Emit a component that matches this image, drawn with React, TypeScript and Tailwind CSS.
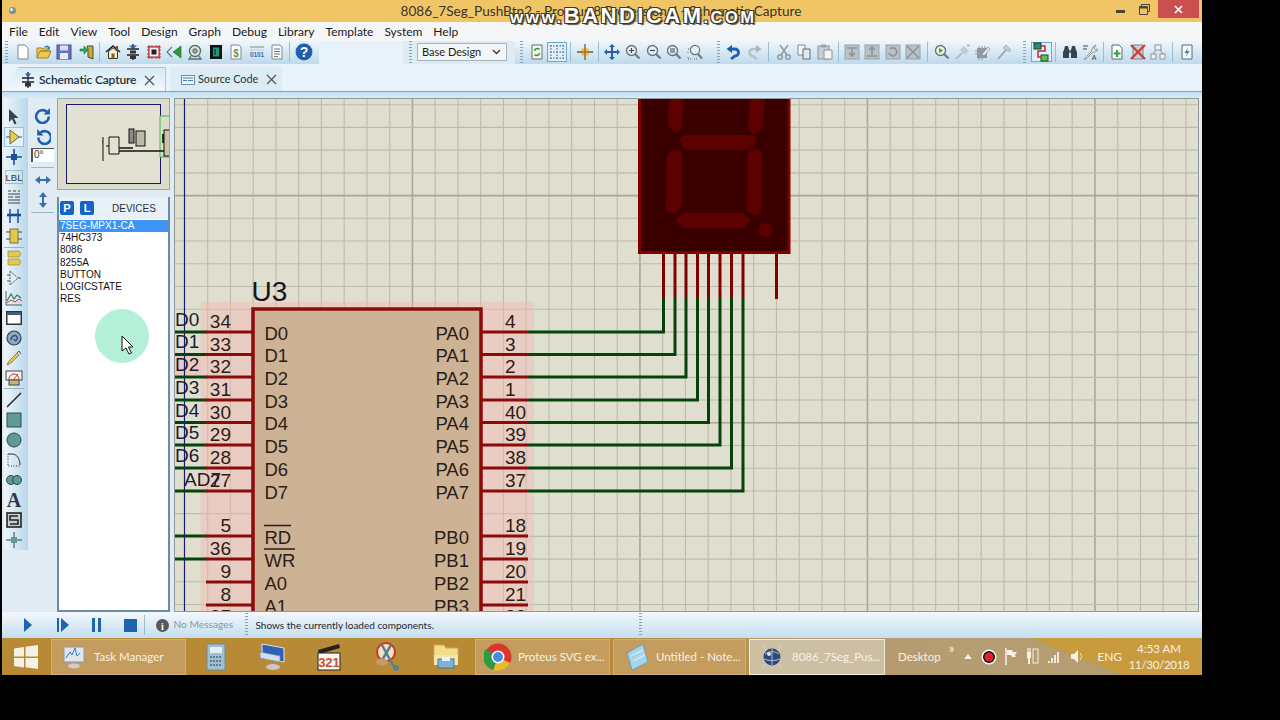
import { FC, ReactNode } from "react";

const menus = ["File", "Edit", "View", "Tool", "Design", "Graph", "Debug", "Library", "Template", "System", "Help"];
const devices = ["7SEG-MPX1-CA", "74HC373", "8086", "8255A", "BUTTON", "LOGICSTATE", "RES"];

const S: FC<{ children: ReactNode; size?: number }> = ({ children, size = 16 }) => (
  <svg width={size} height={size} viewBox="0 0 16 16" fill="none">
    {children}
  </svg>
);

const Lens = ({ inner, fill = "#e8eef2" }: { inner?: ReactNode; fill?: string }) => (
  <S>
    <path d="M10 10l4.5 4.5" stroke="#6b7f8c" strokeWidth="2.4" />
    <circle cx="6.5" cy="6.5" r="5" fill={fill} stroke="#64727c" strokeWidth="1.3" />
    {inner}
  </S>
);

const GrayBlock = ({ d }: { d: string }) => (
  <S>
    <rect x="1" y="1" width="14" height="14" fill="#b9c2c6" stroke="#98a3a8" />
    <path d={d} stroke="#8a9499" strokeWidth="1.6" />
  </S>
);

const icons: Record<string, ReactNode> = {
  new: <S><path d="M3 1h7l3 3v11H3z" fill="#fff" stroke="#7c8a94" /></S>,
  open: <S><path d="M1 14V4h5l1 1h6v2H4l-3 7zm0 0h11l3-7H4" fill="#f2c94f" stroke="#a3812b" /><path d="M8 3c2-2 4-2 5 0l1-1v3h-3l1-1c-1-1-2-1-3 0" fill="#3f7fc0" /></S>,
  save: <S><rect x="1" y="1" width="14" height="14" fill="#6b73c0" stroke="#4a5198" /><rect x="4" y="1.5" width="8" height="5" fill="#d9def0" /><rect x="4" y="9" width="8" height="6" fill="#e9ebf5" /></S>,
  imp: <S><path d="M8 2h6v13l-5-2V5z" fill="#c7a93f" stroke="#4d4d2c" /><path d="M1 5h4V2l4 4-4 4V7H1z" fill="#33a852" stroke="#1d6b33" strokeWidth=".6" /></S>,
  home: <S><path d="M1 8l7-6 7 6" stroke="#222" strokeWidth="1.6" /><path d="M3.5 7.5v7h9v-7L8 3.8z" fill="#f5efd0" stroke="#333" /><rect x="6.5" y="9.5" width="3" height="5" fill="#8b5d24" /><rect x="11" y="2" width="2" height="4" fill="#a33" /></S>,
  comp: <S><path d="M8 0v5M8 11v5M2 5h12M2 11h12" stroke="#222" strokeWidth="1.4" /><path d="M4 1.5h8L8 5z" fill="#2a5da8" /><rect x="5" y="6.5" width="6" height="3" fill="#333" /><rect x="5" y="12" width="6" height="3" fill="#333" /></S>,
  chip: <S><path d="M3 1v14M6 1v14M10 1v14M13 1v14M1 3h14M1 6h14M1 10h14M1 13h14" stroke="#c6363c" /><rect x="3" y="3" width="10" height="10" fill="#fbeeee" stroke="#a02028" /><rect x="5.5" y="5.5" width="5" height="5" fill="#222" /></S>,
  back: <S><path d="M15 2v12L7 8z" fill="#2c9a3c" stroke="#2b5a32" strokeWidth=".6" /><path d="M6 3L1 8l5 5" stroke="#6a7a80" strokeWidth="1.2" /></S>,
  gear: <S><circle cx="8" cy="7" r="5.5" fill="#dfe7e6" stroke="#5c6b6a" strokeWidth="1.4" /><circle cx="8" cy="7" r="2.2" fill="#9bb0a4" stroke="#4d5b55" /><path d="M4 12l-2 3h12l-2-3" stroke="#5c6b6a" strokeWidth="1.3" /></S>,
  pcb: <S><rect x="2" y="1" width="12" height="14" fill="#111" /><rect x="5" y="3.5" width="6" height="9" fill="#1a9c84" /><path d="M7 5v6" stroke="#111" /></S>,
  bill: <S><path d="M3 1h8l2 2v12H3z" fill="#fcfcf4" stroke="#7e8c92" /><text x="8" y="12.5" fontSize="10" fontWeight="700" textAnchor="middle" fill="#7d8f3c" fontFamily="Liberation Sans">$</text></S>,
  code: <S><path d="M1 3h14" stroke="#99a7ae" strokeWidth="1.4" /><path d="M1 6h14" stroke="#c4ced3" /><text x="8" y="13" fontSize="6.4" fontWeight="700" textAnchor="middle" fill="#3b6fb0" fontFamily="Liberation Sans">0101</text></S>,
  doc: <S><path d="M3 1h8l2 2v12H3z" fill="#f6f7f8" stroke="#7e8c92" /><path d="M5 5h6M5 7.5h6M5 10h6M5 12.5h4" stroke="#6e7a80" /></S>,
  help: <svg width="20" height="20" viewBox="0 0 20 20"><circle cx="10" cy="10" r="9" fill="#1f5fae" stroke="#cfe0ef" strokeWidth="1.2" /><text x="10" y="15" fontSize="14" fontWeight="700" textAnchor="middle" fill="#fff" fontFamily="Liberation Sans">?</text></svg>,
  refresh: <S><path d="M3 1h10v14H3z" fill="#f7f8f3" stroke="#61706f" /><path d="M5.5 7c0-2 3-3.500 5-1.500M10.500 9c0 2-3 3.500-5 1.500" stroke="#2d9a38" strokeWidth="1.5" /></S>,
  grid: <S><path d="M1 2h14M1 8h14M1 14h14M2 1v14M8 1v14M14 1v14" stroke="#3a5464" strokeDasharray="1.400 1.800" /></S>,
  origin: <S><path d="M8 0v16M0 8h16" stroke="#6a6238" strokeWidth="1.3" /><rect x="4.500" y="4.500" width="7" height="7" fill="#e4bc3e" /><path d="M8 4v8M4 8h8" stroke="#a8492e" /></S>,
  pan: <S><path d="M8 0l3 3H9v4h4V5l3 3-3 3V9H9v4h2l-3 3-3-3h2V9H3v2L0 8l3-3v2h4V3H5z" fill="#1e5fae" /></S>,
  zin: <Lens inner={<path d="M4 6.500h5M6.500 4v5" stroke="#3d4a52" strokeWidth="1.2" />} />,
  zout: <Lens inner={<path d="M4 6.500h5" stroke="#3d4a52" strokeWidth="1.2" />} />,
  zall: <Lens inner={<rect x="4" y="4" width="5" height="5" fill="#8e9ca4" />} />,
  zarea: <S><path d="M1 5h2M1 8v2M1 13v2h3M7 15h3" stroke="#54626b" strokeDasharray="1 1" /><path d="M11 10l4 4.500" stroke="#6b7f8c" strokeWidth="2.200" /><circle cx="8" cy="6" r="4.600" fill="#e8eef2" stroke="#64727c" strokeWidth="1.200" /></S>,
  undo: <S><path d="M4 5h5a3.500 3.500 0 0 1 0 7l-4 3" stroke="#1c5fae" strokeWidth="2.800" /><path d="M0.500 5L6 1v8z" fill="#1c5fae" /></S>,
  redo: <S><path d="M12 5H7a3.500 3.500 0 0 0 0 7l4 3" stroke="#b9c1c6" strokeWidth="2.600" /><path d="M15.500 5L10 1v8z" fill="#aab3b8" /></S>,
  cut: <S><path d="M4 1l7 10M12 1L5 11" stroke="#8f9aa0" strokeWidth="1.500" /><circle cx="4" cy="13" r="2.300" stroke="#8f9aa0" strokeWidth="1.500" /><circle cx="12" cy="13" r="2.300" stroke="#8f9aa0" strokeWidth="1.500" /></S>,
  copy: <S><path d="M2 1h7v10H2z" fill="#f4f6f7" stroke="#7e8c92" /><path d="M7 5h7v10H7z" fill="#e4e9ec" stroke="#5c6a72" /></S>,
  paste: <S><rect x="1" y="2" width="11" height="13" fill="#c8cfd2" stroke="#8a959b" /><rect x="4" y="0.500" width="5" height="3" fill="#9aa5ab" /><path d="M7 6h8v9H7z" fill="#f3f5f6" stroke="#8a959b" /></S>,
  blk1: <GrayBlock d="M3 4h10M8 4v8M5 9l3 3 3-3" />,
  blk2: <GrayBlock d="M3 12h10M8 3v8M5 6l3-3 3 3" />,
  blk3: <GrayBlock d="M5 5a4 4 0 1 1-1 4" />,
  blk4: <GrayBlock d="M2 2l12 12M14 2L2 14" />,
  zgo: <Lens fill="#f3f0d0" inner={<path d="M5 4l4 2.500L5 9z" fill="#3aa24a" />} />,
  auto: <S><path d="M1 15l6-6M6 5l5 5" stroke="#aab4b9" strokeWidth="1.500" /><path d="M5 6l4-4 5 5-4 4z" fill="#c3cbcf" /><path d="M13 0v3M12 1.500h3" stroke="#aab4b9" /></S>,
  chipw: <S><rect x="2" y="4" width="10" height="10" fill="#8f999e" /><path d="M4 2v2M7 2v2M10 2v2M0 7h2M0 10h2M4 14v2M7 14v2" stroke="#8f999e" /><path d="M7 10l6-7 2 2-6 7z" fill="#e4e8ea" stroke="#6f7a80" strokeWidth=".6" /></S>,
  hammer: <S><path d="M2 15l8-9" stroke="#9aa4a9" strokeWidth="1.800" /><path d="M7 4l3-3 5 5-2 2z" fill="#c5ccd0" stroke="#8f999e" strokeWidth=".6" /></S>,
  net: <svg width="18" height="20" viewBox="0 0 18 20"><rect x="2" y="1" width="7" height="6" fill="#2f8f6a" stroke="#16402e" /><rect x="9" y="13" width="7" height="6" fill="#5bbf55" stroke="#17521f" /><path d="M9 4h4v5H6v6h3" stroke="#c22b2b" strokeWidth="1.500" fill="none" /></svg>,
  bino: <S><path d="M2 6l1-4h3l1 4v8H1V8zM14 6l-1-4h-3L9 6v8h6V8z" fill="#39424a" /><rect x="7" y="6" width="2" height="3" fill="#6a747b" /></S>,
  wrencha: <S><path d="M1 2h5M1 5h4" stroke="#444" /><path d="M2 15l7-7 2-5 3-2-2 3 2 2 3-2-2 3-5 2-7 7z" fill="#dfe4e6" stroke="#59656b" strokeWidth=".6" /><text x="12" y="15.500" fontSize="7" textAnchor="middle" fill="#333" fontFamily="Liberation Sans">A</text></S>,
  adds: <S><path d="M3 1h7l3 3v11H3z" fill="#fff" stroke="#5c6a72" /><path d="M8 6v7M4.500 9.500h7" stroke="#2fa53c" strokeWidth="2.200" /></S>,
  dels: <S><path d="M3 1h10v14H3z" fill="#c8d0d4" stroke="#77858c" /><path d="M1 1l14 14M15 1L1 15" stroke="#d03a30" strokeWidth="2.200" /></S>,
  tree: <S><rect x="5" y="1" width="6" height="5" fill="#eef2f4" stroke="#8a959b" /><rect x="1" y="10" width="5" height="5" fill="#eef2f4" stroke="#8a959b" /><rect x="10" y="10" width="5" height="5" fill="#eef2f4" stroke="#8a959b" /><path d="M6 6l-3 4M10 6l3 4" stroke="#8a959b" /></S>,
  bolt: <S><path d="M3 1h10v14H3z" fill="#f6f8f9" stroke="#5c6a72" /><path d="M9.500 3L5.500 9H8l-1.500 4 4-6H8z" fill="#2f7fc0" /></S>,
};

const Btn = ({ name, active }: { name: string; active?: boolean }) => (
  <div className={`w-[20.6px] h-[20px] flex items-center justify-center shrink-0 ${active ? "border border-[#6fa8c8] bg-[#dff0fa]" : ""}`}>
    {icons[name]}
  </div>
);

const Sep = ({ w = 8 }: { w?: number }) => (
  <div className="h-[20px] flex justify-center shrink-0" style={{ width: w }}>
    <div className="w-px h-full bg-[#9fbccd]" />
  </div>
);

const Grip = () => (
  <div className="w-[3px] h-[22px] shrink-0 [background:repeating-linear-gradient(to_bottom,#8ba3b3_0_1px,transparent_1px_3px)]" />
);

const Group: FC<{ children: ReactNode; className?: string }> = ({ children, className }) => (
  <div className={`h-[23px] pb-[1px] flex items-center bg-gradient-to-b from-[#eef6fb] to-[#bedaec] ${className}`}>{children}</div>
);

const ToolBar = () => (
  <div className="h-[24px] flex bg-[#e8f2f8]">
    <Group className="w-[317px] pl-[3px]">
      <Grip />
      <div className="w-[5px]" />
      <Btn name="new" /><Btn name="open" /><Btn name="save" /><div className="w-[2px]" /><Btn name="imp" />
      <Sep w={5} />
      <Btn name="home" /><Btn name="comp" /><Btn name="chip" /><Btn name="back" /><Btn name="gear" /><Btn name="pcb" /><Btn name="bill" /><Btn name="code" /><Btn name="doc" />
      <Sep w={4} />
      <div className="w-[24px] flex justify-center">{icons.help}</div>
    </Group>
    <Group className="ml-[84px] w-[112px] pl-[6px] bg-none bg-[#dcebf4]">
      <Grip />
      <div className="ml-[5px] w-[90px] h-[18px] border border-[#a8b4bc] bg-[#f4f5f6] flex items-center justify-between pl-[4px] pr-[5px] text-[11px] text-[#1a1a1a]">
        Base Design
        <svg width="9" height="6" viewBox="0 0 9 6"><path d="M1 1l3.500 3.500L8 1" stroke="#333" strokeWidth="1.300" fill="none" /></svg>
      </div>
    </Group>
    <Group className="w-[190px] pl-[5px]">
      <Grip />
      <div className="w-[4px]" />
      <Btn name="refresh" /><Btn name="grid" active />
      <Sep w={7} />
      <Btn name="origin" />
      <Sep w={7} />
      <Btn name="pan" /><Btn name="zin" /><Btn name="zout" /><Btn name="zall" /><Btn name="zarea" />
    </Group>
    <Group className="w-[309px] pl-[12px]">
      <Grip />
      <div className="w-[4px]" />
      <Btn name="undo" /><Btn name="redo" />
      <Sep w={9} />
      <Btn name="cut" /><Btn name="copy" /><Btn name="paste" />
      <Sep w={6} />
      <Btn name="blk1" /><Btn name="blk2" /><Btn name="blk3" /><Btn name="blk4" />
      <Sep w={8} />
      <Btn name="zgo" /><Btn name="auto" /><Btn name="chipw" /><Btn name="hammer" />
    </Group>
    <Group className="flex-1 pl-[9px]">
      <Grip />
      <div className="w-[5px]" />
      <Btn name="net" active />
      <Sep w={8} />
      <Btn name="bino" /><Btn name="wrencha" />
      <Sep w={6} />
      <Btn name="adds" /><Btn name="dels" /><Btn name="tree" />
      <Sep w={8} />
      <Btn name="bolt" />
    </Group>
  </div>
);

const X = ({ size = 11 }: { size?: number }) => (
  <svg width={size} height={size} viewBox="0 0 11 11"><path d="M1 1l9 9M10 1l-9 9" stroke="#555" strokeWidth="1.300" /></svg>
);

const Tabs = () => (
  <div className="h-[27px] flex items-end bg-[#e8f2f8] border-b border-[#7ea6bc] relative">
    <div className="w-[164px] h-[24px] pt-[1px] flex items-center border-t border-r border-[#a9c8da] [clip-path:polygon(10%_0,100%_0,100%_100%,0_100%)] bg-gradient-to-b from-[#d8ebf6] to-[#f0f7fb] pl-[18px]">
      <S><path d="M8 0v16M2 6h12M2 10h12" stroke="#222" strokeWidth="1.300" /><path d="M5 1.500h6L8 5.500z" fill="#2a5da8" /><rect x="5" y="11" width="6" height="3.500" fill="#333" /></S>
      <span className="ml-[3px] text-[12px] font-semibold text-[#24303a] tracking-[-0.15px] whitespace-nowrap">Schematic Capture</span>
      <span className="ml-[8px]"><X /></span>
    </div>
    <div className="w-[112px] ml-[4px] h-[24px] pt-[1px] flex items-center bg-[#dcecf5] pl-[11px]">
      <svg width="14" height="10" viewBox="0 0 14 10"><rect x=".5" y=".5" width="13" height="9" fill="#eef6fb" stroke="#6f8ea3" /><path d="M2 3h10" stroke="#3f7fc0" /><path d="M2 5.500h4M7 5.500h5" stroke="#3f7fc0" /></svg>
      <span className="ml-[3px] text-[10.800px] text-[#24303a] whitespace-nowrap">Source Code</span>
      <span className="ml-[8px]"><X /></span>
    </div>
  </div>
);

const ToolIcon: Record<string, ReactNode> = {
  arrow: <S><path d="M3 0v13l3-3 2.500 5.500 2-1L8 9h4.500z" fill="#39414a" /></S>,
  comp: <S><path d="M0 8h4M12 8h4" stroke="#555" /><path d="M4 1l9 7-9 7z" fill="#e8cc4c" stroke="#6b6a3a" /></S>,
  junc: <S><path d="M8 0v16M0 8h16" stroke="#1e4e96" strokeWidth="1.600" /><rect x="5" y="5" width="6" height="6" fill="#1e4e96" /></S>,
  lbl: <svg width="18" height="14" viewBox="0 0 18 14"><rect x=".5" y=".5" width="17" height="13" fill="none" stroke="#7c8a94" strokeDasharray="1 1" /><text x="9" y="11" fontSize="9.500" textAnchor="middle" fill="#333" fontFamily="Liberation Sans">LBL</text></svg>,
  script: <S><path d="M2 2h3M7 2h3M12 2h2M2 5h12M2 8h5M9 8h5M2 11h12M2 14h12" stroke="#444" /></S>,
  bus: <S><path d="M1 7h14" stroke="#1e4e96" strokeWidth="2.600" /><path d="M4 1v14M12 1v14" stroke="#1e4e96" strokeWidth="1.500" /></S>,
  sub: <S><rect x="4" y="1" width="8" height="14" fill="#e4c84a" stroke="#7c7238" /><path d="M0 4h4M0 11h4M12 4h4M12 11h4" stroke="#444" /></S>,
  term: <S><path d="M2 1h11l2 3-2 3H2z" fill="#e4c84a" stroke="#8c8038" strokeWidth=".6" /><path d="M2 9h11l2 3-2 3H2z" fill="#e4c84a" stroke="#8c8038" strokeWidth=".6" /></S>,
  pin: <S><path d="M1 5h3M1 11h3M12 8h3" stroke="#555" /><path d="M4 1l8 7-8 7z" fill="#e4edf3" stroke="#4f5b63" strokeDasharray="2 1" /></S>,
  graph: <svg width="18" height="16" viewBox="0 0 18 16"><path d="M1 1v14h16" stroke="#3f6070" fill="none" /><path d="M2 11l4-7 3 5 3-4 4 3" stroke="#2f7a50" strokeWidth="1.200" fill="none" /><path d="M2 13l4-3 4 2 4-3 3 2" stroke="#c23b30" fill="none" /></svg>,
  win: <svg width="16" height="14" viewBox="0 0 16 14"><rect x=".75" y=".75" width="14.500" height="12.500" fill="#fff" stroke="#333" strokeWidth="1.500" /><rect x="1" y="1" width="14" height="3" fill="#3f5f78" /></svg>,
  tape: <S><circle cx="8" cy="8" r="7" fill="#8fa8b8" stroke="#33434f" strokeWidth="1.200" /><path d="M5 10c0-4 5-6 6-3s-2 5-3 2" stroke="#1e4e96" strokeWidth="1.400" /></S>,
  pen: <S><path d="M1 15l2-4 8-8 2 2-8 8z" fill="#e4c84a" stroke="#6a6238" strokeWidth=".7" /><path d="M11 3l2-2 2 3" stroke="#555" /></S>,
  gauge: <svg width="18" height="16" viewBox="0 0 18 16"><rect x="1" y="1" width="16" height="9" fill="#f4f4f0" stroke="#444" /><path d="M4 9a5 5 0 0 1 10 0M9 9l4-5" stroke="#c23b30" fill="none" /><rect x="4" y="10" width="10" height="5" fill="#c9b275" stroke="#444" /></svg>,
  line: <S><path d="M1 15L15 1" stroke="#222" strokeWidth="1.400" /></S>,
  rect: <S><rect x="1" y="1" width="14" height="14" fill="#5f9a98" stroke="#2e4a4a" /></S>,
  circ: <S><circle cx="8" cy="8" r="7" fill="#5f9a98" stroke="#2e4a4a" /></S>,
  arc: <S><path d="M2 2h4c5 0 8 5 8 11" stroke="#333" /><path d="M2 2v12h12" stroke="#333" strokeDasharray="1 1.500" /></S>,
  path: <S><circle cx="5" cy="8" r="4.500" fill="#5f9a98" stroke="#2e4a4a" /><circle cx="11" cy="8" r="4.500" fill="#5f9a98" stroke="#2e4a4a" /></S>,
  a: <span className="text-[20px] leading-none font-bold text-[#30363c] [font-family:'Liberation_Serif',serif]">A</span>,
  s: <svg width="16" height="16" viewBox="0 0 16 16"><rect x="1" y="1" width="14" height="14" fill="#c7cdd0" stroke="#222" strokeWidth="1.600" /><path d="M12 4H4v4h8v4H4" stroke="#222" strokeWidth="1.600" fill="none" /></svg>,
  mark: <S><path d="M8 0v16M0 8h16" stroke="#2e4a4a" /><rect x="5" y="5" width="6" height="6" fill="#5f9a98" /></S>,
};

const LeftStrip = () => {
  const top = ["arrow", "comp", "junc", "lbl", "script", "bus", "sub"];
  const mid = ["term", "pin", "graph", "win", "tape", "pen", "gauge"];
  const low = ["line", "rect", "circ", "arc", "path", "a", "s", "mark"];
  const cell = (n: string) => (
    <div key={n} className={`h-[19.900px] w-[20px] shrink-0 flex items-center justify-center ${n === "comp" ? "bg-[#e2f0f9] border border-[#9cc0d6]" : ""}`}>
      {ToolIcon[n]}
    </div>
  );
  return (
    <div className="w-[24px] ml-[2px] h-[452px] pt-[9px] flex flex-col items-start bg-gradient-to-r from-[#edf5fa] to-[#b9d7ea]">
      {top.map(cell)}
      <div className="h-px w-[20px] my-[0.500px] bg-[#9db4c2]" />
      {mid.map(cell)}
      <div className="h-px w-[20px] my-[1px] bg-[#9db4c2]" />
      {low.map(cell)}
    </div>
  );
};

const RotStrip = () => (
  <div className="w-[29px] flex flex-col items-center pt-[9px]">
    <S size={17}><path d="M14 9a6 6 0 1 1-2-4.500" stroke="#1f5fae" strokeWidth="2.400" /><path d="M15 1v6H9z" fill="#1f5fae" /></S>
    <div className="h-[4px]" />
    <S size={17}><path d="M4 9a6 6 0 1 0 2-4.500" stroke="#1f5fae" strokeWidth="2.400" /><path d="M3 1v6h6z" fill="#1f5fae" /></S>
    <div className="mt-[3px] w-[23px] h-[14px] border-l-2 border-t border-[#555] bg-white text-[10px] leading-[12px] pl-[1px] text-[#333] [font-family:'Liberation_Sans']">0°</div>
    <div className="mt-[5px] w-[23px] h-px bg-[#9db4c2]" />
    <div className="mt-[5px] h-[14px] flex items-center">
      <svg width="16" height="10" viewBox="0 0 16 10"><path d="M0 5l5-4v3h6V1l5 4-5 4V6H5v3z" fill="#3a6ea8" /></svg>
    </div>
    <div className="mt-[4px] h-[18px] flex items-center">
      <svg width="10" height="16" viewBox="0 0 10 16"><path d="M5 0l4 5H6v6h3l-4 5-4-5h3V5H1z" fill="#3a6ea8" /></svg>
    </div>
    <div className="mt-[3px] w-[23px] h-px bg-[#9db4c2]" />
  </div>
);

const Preview = () => (
  <div className="h-[92px] border border-[#9aa7a8] bg-[#dcdccb] flex items-center pl-[8px] overflow-hidden">
    <svg width="105" height="80" viewBox="0 0 105 80" className="shrink-0">
      <rect x=".5" y=".5" width="94" height="79" fill="#e2e1d2" stroke="#18186a" />
      <rect x="94" y="12" width="11" height="41" fill="#dcdccb" stroke="#3fbf3f" />
      <path d="M37 33v24M37 38h-1M43 33h10v17H43zM40 42h3" stroke="#111" fill="none" />
      <path d="M53 47h45M53 44h14" stroke="#111" strokeWidth="1.600" />
      <rect x="63" y="25" width="5" height="14" fill="#8a8a80" stroke="#111" />
      <rect x="70" y="27" width="9" height="15" fill="#bdb9a8" stroke="#111" />
      <rect x="96" y="30" width="7" height="9" fill="#333" />
      <rect x="98" y="26" width="7" height="26" fill="#d0c4a8" stroke="#111" />
    </svg>
  </div>
);

const Devices = () => (
  <div className="flex-1 mt-[7px] flex flex-col border-x-2 border-b-2 border-[#6f8ba3] border-t-0">
    <div className="h-[22px] flex items-center bg-[#e8f1f7] pl-[1px]">
      <span className="w-[14px] h-[14px] rounded-[2px] bg-[#1565c8] text-white text-[11px] font-bold flex items-center justify-center">P</span>
      <span className="ml-[6px] w-[14px] h-[14px] rounded-[2px] bg-[#1565c8] text-white text-[11px] font-bold flex items-center justify-center">L</span>
      <span className="ml-[18px] text-[10px] text-[#2a3038]">DEVICES</span>
    </div>
    <div className="flex-1 bg-white pt-[1px] text-[10px] leading-[12.200px] text-[#111]">
      {devices.map((d, i) => (
        <div key={d} className={`pl-[1px] ${i === 0 ? "bg-[#3d94f6] text-white" : ""}`}>{d}</div>
      ))}
    </div>
  </div>
);

const gridX = Array.from({ length: 45 }, (_, i) => 207.7 + i * 22.75);
const gridY = Array.from({ length: 23 }, (_, i) => 104.7 + i * 22.72);

const leftRows: [number, string, string | null, boolean][] = [
  [332, "34", "D0", true], [354.5, "33", "D1", true], [377, "32", "D2", true], [400, "31", "D3", true],
  [422.5, "30", "D4", true], [445, "29", "D5", true], [468, "28", "D6", true], [491, "27", "D7", true],
  [536, "5", "RD", true], [559, "36", "WR", true], [582, "9", "A0", false], [605, "8", "A1", false], [627, "35", null, false],
];
const rightRows: [number, string, string | null][] = [
  [332, "4", "PA0"], [354.5, "3", "PA1"], [377, "2", "PA2"], [400, "1", "PA3"],
  [422.5, "40", "PA4"], [445, "39", "PA5"], [468, "38", "PA6"], [491, "37", "PA7"],
  [536, "18", "PB0"], [559, "19", "PB1"], [582, "20", "PB2"], [605, "21", "PB3"], [627, "22", null],
];
const pinXs = [663.5, 675, 686, 697.5, 708.5, 720, 731.5, 743];
const netLabels: [string, number, number][] = [
  ["D0", 175, 326], ["D1", 175, 348], ["D2", 175, 371], ["D3", 175, 394],
  ["D4", 175, 417], ["D5", 175, 439], ["D6", 175, 462], ["AD7", 184, 486],
];

const Schematic = () => (
  <svg viewBox="175 99 1024 513" width="1024" height="513" className="block" fontFamily="'Liberation Sans', Arial, sans-serif">
    {gridX.map((x, i) => (
      <line key={i} x1={x} x2={x} y1="98" y2="612" stroke={(i + 1) % 10 === 0 ? "#a8a896" : "#bcbcaa"} strokeWidth={(i + 1) % 10 === 0 ? 1.600 : 1.100} />
    ))}
    {gridY.map((y, i) => (
      <line key={i} x1="175" x2="1199" y1={y} y2={y} stroke={(i - 4) % 10 === 0 ? "#a8a896" : "#bcbcaa"} strokeWidth={(i - 4) % 10 === 0 ? 1.600 : 1.100} />
    ))}
    <rect x="200.500" y="302" width="333.500" height="320" fill="#f6b4b0" opacity=".42" />
    <rect x="175" y="356" width="26" height="19" fill="#f6b4b0" opacity=".5" />
    <line x1="184.500" x2="184.500" y1="98" y2="612" stroke="#1a1a78" strokeWidth="1.200" />

    {/* 7 seg display */}
    <rect x="639.500" y="96" width="149.500" height="156.500" fill="#3a0000" stroke="#800000" strokeWidth="3" />
    <g fill="#5c0000" stroke="#5c0000" strokeWidth="2" strokeLinejoin="round">
      <path d="M670 96h13l-2 29-4 7-5-3-3-5z" />
      <path d="M751 96h13l-2 30-5 6-5 0-3-4z" />
      <path d="M680 138l6-2h64l6 2-5 11h-66z" />
      <path d="M668 155l5-4 8 1v52l-6 9-8-3z" />
      <path d="M749 153l8-4 4 3-1 60-5 2-7-4z" />
      <path d="M677 220l6-6h60l6 6-6 7h-60z" />
      <circle cx="765.500" cy="230" r="6" />
    </g>
    {pinXs.map((x) => (
      <line key={x} x1={x} x2={x} y1="254" y2="298" stroke="#800000" strokeWidth="3" />
    ))}
    <line x1="776.500" x2="776.500" y1="254" y2="299" stroke="#800000" strokeWidth="3" />

    {/* wires */}
    {rightRows.slice(0, 8).map(([y], i) => (
      <path key={i} d={`M528 ${y}H${pinXs[i]}V298`} stroke="#06420c" strokeWidth="3" fill="none" />
    ))}
    {leftRows.map(([y, , , wired]) =>
      wired ? <line key={y} x1="175" x2="207" y1={y} y2={y} stroke="#06420c" strokeWidth="3" /> : null
    )}

    {/* chip */}
    {leftRows.map(([y]) => <line key={y} x1="206" x2="253" y1={y} y2={y} stroke="#8c0a0a" strokeWidth="3" />)}
    {rightRows.map(([y]) => <line key={y} x1="481" x2="528" y1={y} y2={y} stroke="#8c0a0a" strokeWidth="3" />)}
    <rect x="253" y="309" width="228" height="330" fill="#cdb296" stroke="#8c0a0a" strokeWidth="3.500" />
    <text x="251.500" y="301" fontSize="28" fill="#16161c">U3</text>

    <g fontSize="18.500" fill="#2a1e16">
      {leftRows.map(([y, num, label]) => (
        <g key={num}>
          <text x="231" y={y - 4} textAnchor="end" fontSize="19">{num}</text>
          {label ? <text x="264.500" y={y + 7.500}>{label}</text> : null}
        </g>
      ))}
      {rightRows.map(([y, num, label]) => (
        <g key={num}>
          <text x="505" y={y - 4} fontSize="19">{num}</text>
          {label ? <text x="469" y={y + 7.500} textAnchor="end">{label}</text> : null}
        </g>
      ))}
    </g>
    <path d="M264 525.500h27M264 549h31" stroke="#2a1e16" strokeWidth="1.300" />
    <g fontSize="19" fill="#1c1c30">
      {netLabels.map(([t, x, y]) => <text key={t} x={x} y={y}>{t}</text>)}
    </g>
  </svg>
);

const Media = ({ d, fill }: { d: string; fill: string }) => (
  <svg width="14" height="18" viewBox="0 0 14 18"><path d={d} fill={fill} /></svg>
);

const gripV = "w-[3px] h-[24px] [background:repeating-linear-gradient(to_bottom,#8ba3b3_0_1px,transparent_1px_3px)]";

const StatusBar = () => (
  <div className="h-[26px] flex items-center bg-gradient-to-b from-[#f2f8fc] to-[#c4def0] relative">
    <div className="w-[22px]" />
    <Media d="M0 2l8 7-8 7z" fill="#1f62b0" />
    <div className="w-[19px]" />
    <Media d="M0 2h2v14H0zM4 2l8 7-8 7z" fill="#1f62b0" />
    <div className="w-[19.500px]" />
    <Media d="M1 2h3v14H1zM7 2h3v14H7z" fill="#1f62b0" />
    <div className="w-[19px]" />
    <Media d="M0 3h13v13H0z" fill="#1f62b0" />
    <div className="ml-[6px] h-[20px] w-px bg-[#9fbccd]" />
    <svg className="ml-[11px]" width="13" height="13" viewBox="0 0 13 13">
      <circle cx="6.500" cy="6.500" r="6.500" fill="#56585a" />
      <text x="6.500" y="10.500" fontSize="10" fontWeight="700" fill="#fff" textAnchor="middle" fontFamily="Liberation Serif">i</text>
    </svg>
    <span className="ml-[5px] w-[71px] text-[10.200px] text-[#8f979d] whitespace-nowrap">No Messages</span>
    <div className={gripV} />
    <span className="ml-[8px] text-[10px] text-[#1d2730] w-[383px] whitespace-nowrap">Shows the currently loaded components.</span>
    <div className={gripV} />
  </div>
);

const TaskBtn: FC<{ w: number; label?: string; icon: ReactNode; active?: boolean; ml?: string }> = ({ w, label, icon, active, ml }) => (
  <div
    style={{ width: w }}
    className={`h-[36px] flex items-center shrink-0 ${ml ?? ""} ${active ? "border border-[#f3ecdc] bg-[#cdbfa3]" : "border border-[#cfb07a] bg-[#c49d5e]"}`}
  >
    <span className="ml-[8px] w-[28px] flex justify-center shrink-0">{icon}</span>
    <span className="ml-[6px] text-[11.500px] text-[#f7f1e4] whitespace-nowrap">{label}</span>
  </div>
);

const TaskBar = () => (
  <div className="h-[37px] flex items-center text-white [background:linear-gradient(22deg,#b98a35_0,#b98a35_52%,#b59c70_70%,#b59d72_86.500%,#c79a3c_87%,#c99c40_100%)]">
    <svg className="ml-[11px] shrink-0" width="26" height="26" viewBox="0 0 26 26"><path d="M1 4.500l10-1.500v9.500H1zM12.500 2.800L25 1v11.500H12.500zM1 14h10v9.500L1 22zM12.500 14H25v11l-12.500-1.800z" fill="#f6f1e4" /></svg>
    <TaskBtn ml="ml-[12px]" w={135} label="Task Manager" icon={
      <svg width="26" height="26" viewBox="0 0 26 26"><rect x="3" y="3" width="20" height="15" fill="#dfe6ea" stroke="#8b9aa2" /><path d="M5 14l4-6 2 3 3-7 2 8 3-3" stroke="#3f79b6" fill="none" /><ellipse cx="13" cy="22" rx="6" ry="2.500" fill="#ccc" /></svg>
    } />
    <div className="w-[289px] flex items-center justify-around pl-[4px] shrink-0">
      <svg width="20" height="28" viewBox="0 0 20 28"><rect x="1" y="1" width="18" height="26" fill="#9fc1cf" stroke="#6c8a98" /><rect x="4" y="4" width="12" height="6" fill="#e4eef2" /><path d="M4 14h12M4 18h12M4 22h12" stroke="#5d7f90" strokeWidth="2" strokeDasharray="2 1" /></svg>
      <svg width="26" height="28" viewBox="0 0 26 28"><path d="M3 1l22 4v14L3 15z" fill="#2b62b6" stroke="#dbe3ea" /><path d="M1 9l20 4v6L1 15z" fill="#d2dfe9" stroke="#6f8fac" strokeDasharray="2 1" /><ellipse cx="14" cy="24" rx="7" ry="3" fill="#c5c9cb" /></svg>
      <svg width="24" height="28" viewBox="0 0 24 28"><path d="M1 7L22 1l1 4L2 11z" fill="#222" /><rect x="1" y="10" width="22" height="17" fill="#f7f7f4" stroke="#222" /><text x="12" y="24" fontSize="13" fontWeight="700" textAnchor="middle" fill="#c7502c" fontFamily="Liberation Sans">321</text></svg>
      <svg width="26" height="30" viewBox="0 0 26 30"><circle cx="12" cy="10" r="9" fill="#f1e1c8" stroke="#c8372c" strokeWidth="2" /><path d="M8 3l12 22M17 3L7 20" stroke="#5a7f8f" strokeWidth="2.500" /><circle cx="22" cy="26" r="3" fill="#5a7f8f" /><ellipse cx="8" cy="20" rx="6" ry="3.500" fill="#c59a6a" /></svg>
      <svg width="26" height="28" viewBox="0 0 26 28"><path d="M1 2h10l2 3h12v10H1z" fill="#f3dc8a" stroke="#c9a94a" /><path d="M1 12h24v10H1z" fill="#f6e7a8" /><rect x="5" y="16" width="16" height="9" fill="#7fb0d8" stroke="#3f78a8" /><rect x="9" y="14" width="8" height="4" fill="#eaf3fa" /></svg>
    </div>
    <TaskBtn w={135} label="Proteus SVG ex..." icon={
      <svg width="28" height="28" viewBox="0 0 28 28"><circle cx="14" cy="14" r="13.500" fill="#d9372c" /><path d="M14 14L26 20A13.500 13.500 0 0 1 9 27z" fill="#e9b92e" /><path d="M14 14L9 27A13.500 13.500 0 0 1 2 6z" fill="#2f9a44" /><circle cx="14" cy="14" r="6.500" fill="#fff" /><circle cx="14" cy="14" r="5" fill="#4a8be0" /></svg>
    } />
    <TaskBtn ml="ml-[3px]" w={133} label="Untitled - Note..." icon={
      <svg width="26" height="28" viewBox="0 0 26 28"><path d="M4 10L20 1l5 18-16 8z" fill="#a6d4ea" stroke="#6c9cb8" /><path d="M8 13l12-6M10 18l12-6" stroke="#eaf5fb" /></svg>
    } />
    <TaskBtn ml="ml-[3px]" w={136} active label="8086_7Seg_Pus..." icon={
      <svg width="24" height="26" viewBox="0 0 24 26"><path d="M2 2l20 22M22 2L2 24" stroke="#e7e2d4" strokeWidth=".7" /><circle cx="12" cy="13" r="8.500" fill="#2f4a78" /><path d="M5 10c4-3 10-3 14 0M4 15c5 2 11 2 16 0M12 5v16" stroke="#a8c0dc" fill="none" /><circle cx="9" cy="10" r="2" fill="#dbe6f2" /></svg>
    } />
    <span className="ml-[13px] text-[11.500px] text-[#f7f1e4]">Desktop</span>
    <span className="ml-[8px] mb-[16px] text-[13px] leading-none text-[#f7f1e4]">»</span>
    <svg className="ml-[10px]" width="8" height="6" viewBox="0 0 8 6"><path d="M4 0l4 5H0z" fill="#f7f1e4" /></svg>
    <svg className="ml-[9px]" width="16" height="16" viewBox="0 0 16 16"><circle cx="8" cy="8" r="7.500" fill="#fff" /><circle cx="8" cy="8" r="6" fill="#111" /><circle cx="8" cy="8" r="4.500" fill="#e0202a" /></svg>
    <svg className="ml-[8px]" width="12" height="17" viewBox="0 0 12 17"><path d="M1 0v17" stroke="#fff" strokeWidth="1.300" /><path d="M2 2h5l1 2h4l-2 3 1 2H7L6 7H2z" fill="#f7f1e4" /></svg>
    <svg className="ml-[9px]" width="13" height="17" viewBox="0 0 13 17"><path d="M2 0v4M4 0v4" stroke="#fff" /><path d="M1 4h4v6H4v6H2v-6H1z" fill="#f7f1e4" /><rect x="7" y="1" width="5" height="14" fill="none" stroke="#f7f1e4" /></svg>
    <svg className="ml-[9px]" width="13" height="13" viewBox="0 0 13 13"><path d="M1 11v2M4 8v5M7 5v8M10 2v11" stroke="#f7f1e4" strokeWidth="1.800" /></svg>
    <svg className="ml-[9px]" width="13" height="15" viewBox="0 0 13 15"><path d="M1 5h3l4-4v13l-4-4H1z" fill="#f7f1e4" /><path d="M10 4c2 2 2 5 0 7" stroke="#f7f1e4" fill="none" /></svg>
    <span className="ml-[14px] text-[12px] text-[#f7f1e4]">ENG</span>
    <div className="ml-[4px] w-[66px] flex flex-col items-center text-[11.500px] leading-[16px] text-[#f7f1e4]">
      <span>4:53 AM</span>
      <span className="whitespace-nowrap tracking-[-0.3px]">11/30/2018</span>
    </div>
  </div>
);

const App = () => (
  <div className="w-[1280px] h-[720px] bg-black overflow-hidden relative [font-family:Lato,'Open_Sans',sans-serif]">
    <div className="w-[1200px] h-[675px] ml-[2px] flex flex-col">
      <div className="h-[22px] flex items-center bg-[#efc566] relative">
        <span className="w-full text-center text-[13.600px] text-[#3a3428] whitespace-nowrap pr-[2px]">8086_7Seg_PushBtn2 - Proteus 8 Professional - Schematic Capture</span>
        <svg className="absolute left-[6px] top-[6px]" width="9" height="9" viewBox="0 0 9 9"><circle cx="4.500" cy="4.500" r="3.500" fill="#7f8f9c" /><circle cx="3.500" cy="3.500" r="1.500" fill="#e8eef2" /></svg>
        <svg className="absolute left-[1114px] top-[10px]" width="9" height="3" viewBox="0 0 9 3"><rect width="9" height="3" fill="#4b4536" /></svg>
        <svg className="absolute left-[1137px] top-[4px]" width="11" height="11" viewBox="0 0 11 11"><path d="M2.500 2.500v-2h8v7h-2M.5 2.500h8v8h-8z" fill="none" stroke="#4b4536" /><rect x=".5" y="2.500" width="8" height="2" fill="#4b4536" /></svg>
        <div className="absolute left-[1156px] top-0 w-[41px] h-[18px] bg-[#c9504f] flex items-center justify-center">
          <svg width="9" height="9" viewBox="0 0 9 9"><path d="M1 1l7 7M8 1L1 8" stroke="#fff" strokeWidth="1.700" /></svg>
        </div>
      </div>
      <div className="h-[19px] flex items-center gap-[11px] pl-[7px] bg-[#f4f6f8] text-[12px] text-[#1a1a1a]">
        {menus.map((m) => <span key={m}>{m}</span>)}
      </div>
      <ToolBar />
      <Tabs />
      <div className="h-[6px] bg-gradient-to-b from-[#c2dff2] to-[#d8ebf6]" />
      <div className="flex-1 min-h-0 flex bg-[#e0ebf3]">
        <div className="h-full">
          <LeftStrip />
        </div>
        <RotStrip />
        <div className="w-[113px] flex flex-col [font-family:'Liberation_Sans',sans-serif]">
          <Preview />
          <Devices />
        </div>
        <div className="w-[4px]" />
        <div className="w-[1025px] border border-[#8e9a9c] bg-[#e0dfcf] overflow-hidden">
          <Schematic />
        </div>
      </div>
      <StatusBar />
      <TaskBar />
    </div>

    {/* recorder watermark */}
    <div className="absolute left-[510px] top-[3px] font-bold text-white text-[22px] leading-[26px] whitespace-nowrap tracking-[2.500px] [font-family:'Liberation_Sans',sans-serif] [text-shadow:1px_1px_0_#3a3a2c,-1px_-1px_0_#3a3a2c,1px_-1px_0_#3a3a2c,-1px_1px_0_#3a3a2c,2px_2px_1px_#55523e]">
      <span className="text-[17px]">www.</span>BANDICAM<span className="text-[16.500px]">.COM</span>
    </div>

    {/* cursor highlight */}
    <div className="absolute left-[95px] top-[309px] w-[54px] h-[54px] rounded-full bg-[#b4efd8]" />
    <svg className="absolute left-[121px] top-[335px]" width="14" height="20" viewBox="0 0 14 20">
      <path d="M1 1v15l4-3 3 6 2.500-1-3-6H12z" fill="#fff" stroke="#111" />
    </svg>
  </div>
);

export default App;
